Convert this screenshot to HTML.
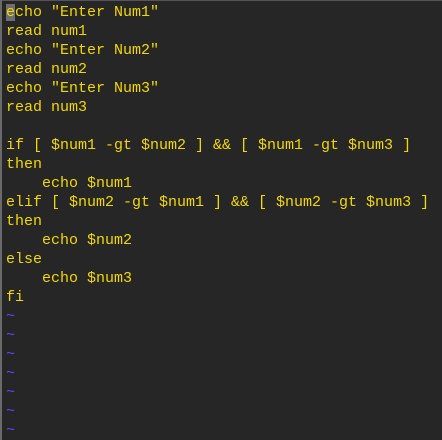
<!DOCTYPE html>
<html><head><style>
html,body{margin:0;padding:0;}
body{width:442px;height:440px;background:#262626;overflow:hidden;position:relative;}
.bl{position:absolute;left:0;top:0;width:2px;height:440px;background:#6a6a6a;}
.bt{position:absolute;left:0;top:0;width:442px;height:1px;background:#555;}
pre{margin:0;position:absolute;left:6px;top:3px;font-family:"Liberation Mono",monospace;font-size:15px;line-height:19px;color:#f2d800;}
.t{color:#5a48ff;}
.cur{background:#6e6e6e;}
</style></head><body>
<div class="bt"></div><div class="bl"></div>
<pre><span class="cur">e</span>cho "Enter Num1"
read num1
echo "Enter Num2"
read num2
echo "Enter Num3"
read num3

if [ $num1 -gt $num2 ] &amp;&amp; [ $num1 -gt $num3 ]
then
    echo $num1
elif [ $num2 -gt $num1 ] &amp;&amp; [ $num2 -gt $num3 ]
then
    echo $num2
else
    echo $num3
fi
<span class="t">~
~
~
~
~
~
~</span></pre>
</body></html>
